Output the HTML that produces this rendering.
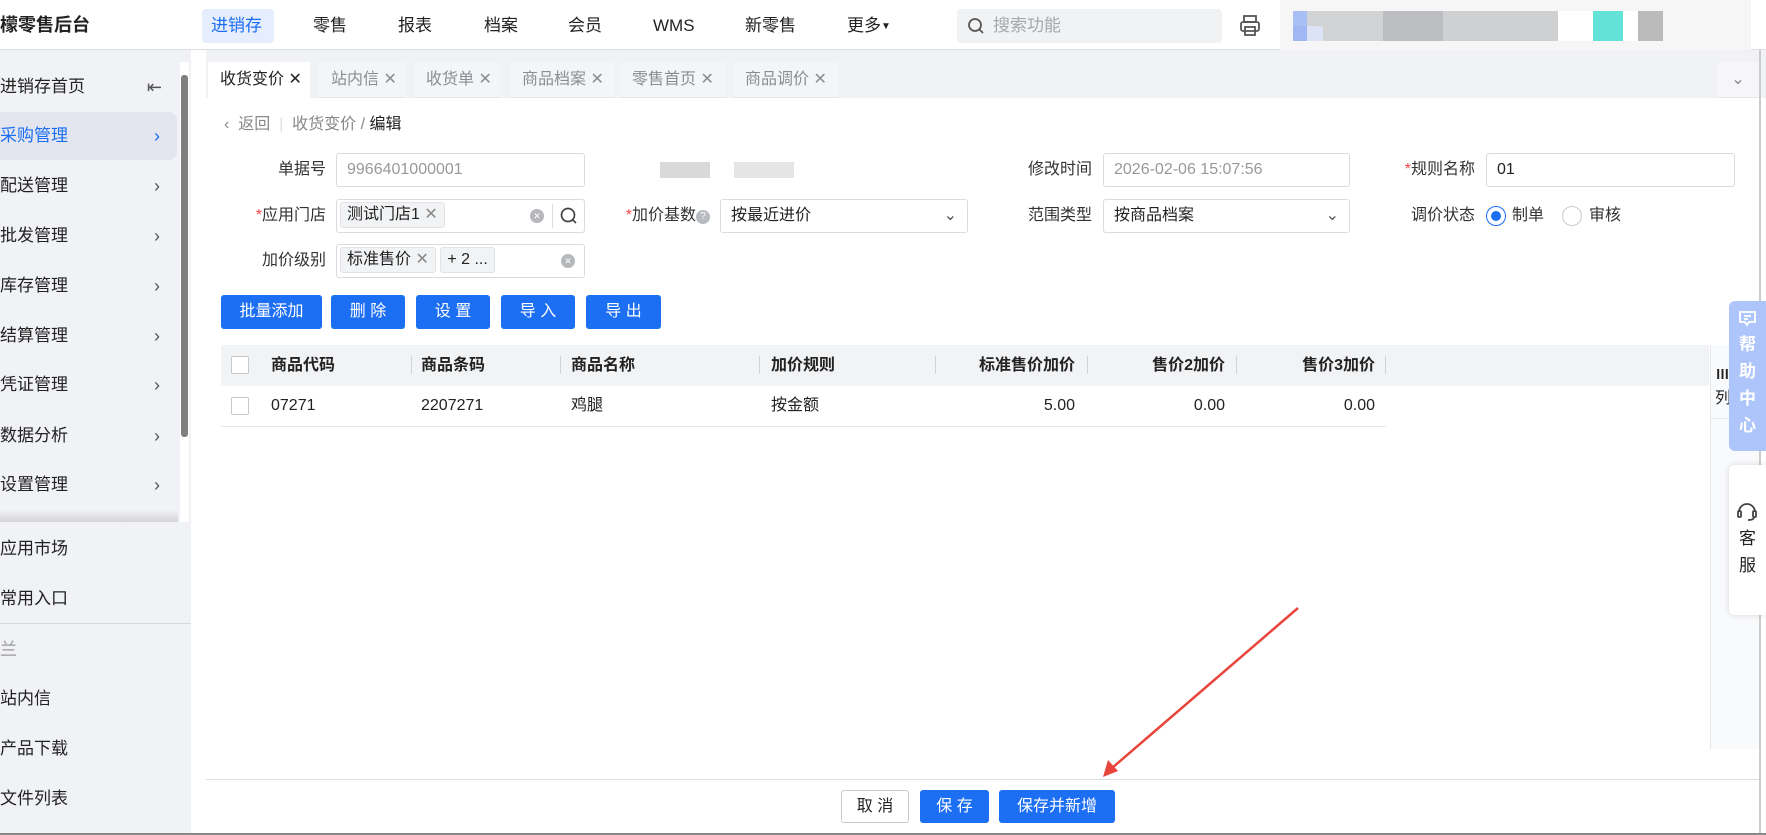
<!DOCTYPE html>
<html><head><meta charset="utf-8"><style>
*{box-sizing:border-box;margin:0;padding:0}
body{width:1766px;height:835px;overflow:hidden;position:relative;background:#fff;font-family:"Liberation Sans","Noto Sans CJK SC",sans-serif;font-size:16px;color:#222}
.a{position:absolute;white-space:nowrap}
.nav{left:0;top:0;width:1766px;height:50px;background:#fff;border-bottom:1px solid #dcdde0}
.mi{top:9px;height:34px;line-height:34px;font-size:17px;color:#222}
.side{left:0;top:50px;width:191px;height:785px;background:#f1f2f5}
.si{left:0;font-size:17px;color:#222;width:178px;height:46px;line-height:46px}
.si .ch{position:absolute;right:18px;top:0;color:#555;font-size:18px}
.tabbar{left:206px;top:50px;width:1560px;height:48px;background:#f1f2f5}
.tab{top:62px;height:36px;line-height:36px;background:#f4f5f7;color:#8a8d93;font-size:16px;padding-left:12px;border-bottom:1px solid #e4e5e8}
.lbl{font-size:16px;color:#333;text-align:right;height:34px;line-height:34px}
.inp{height:34px;border:1px solid #d9dbe0;border-radius:3px;background:#fff;line-height:32px;padding-left:10px;font-size:16px}
.btn{top:295px;height:34px;line-height:34px;background:#1c6ef2;color:#fff;border-radius:3px;text-align:center;font-size:16px}
.th{top:345px;height:41px;line-height:41px;font-weight:bold;font-size:16px;color:#222}
.td{top:386px;height:40px;line-height:40px;font-size:16px;color:#222}
.sep{top:356px;width:1px;height:18px;background:#d0d2d6}
.tag{height:26px;line-height:24px;background:#f2f3f5;border:1px solid #e2e3e6;border-radius:3px;padding:0 6px;font-size:16px}
.cb{width:18px;height:18px;border:1px solid #c6c8cc;border-radius:2px;background:#fff}
</style></head><body>
<div class="a nav"></div>
<div class="a" style="left:0;top:12px;font-size:18px;font-weight:bold;line-height:26px">檬零售后台</div>
<div class="a" style="left:202px;top:9px;width:72px;height:34px;background:#e6edfd;border-radius:4px"></div>
<div class="a mi" style="left:211px;color:#1c6ef2">进销存</div>
<div class="a mi" style="left:313px">零售</div>
<div class="a mi" style="left:398px">报表</div>
<div class="a mi" style="left:484px">档案</div>
<div class="a mi" style="left:568px">会员</div>
<div class="a mi" style="left:653px">WMS</div>
<div class="a mi" style="left:745px">新零售</div>
<div class="a mi" style="left:847px">更多<span style="font-size:10px;vertical-align:2px">▼</span></div>
<div class="a" style="left:957px;top:9px;width:265px;height:34px;background:#f1f2f4;border-radius:4px"></div>
<svg class="a" style="left:967px;top:17px" width="18" height="18" viewBox="0 0 18 18"><circle cx="8" cy="8" r="6" fill="none" stroke="#555" stroke-width="1.8"/><path d="M12.5 12.5L16 16" stroke="#555" stroke-width="1.8"/></svg>
<div class="a" style="left:993px;top:9px;line-height:34px;color:#a5a8ad;font-size:17px">搜索功能</div>
<svg class="a" style="left:1238px;top:14px" width="24" height="24" viewBox="0 0 24 24" fill="none" stroke="#555" stroke-width="1.8"><rect x="6" y="2" width="12" height="6"/><rect x="3" y="8" width="18" height="9" rx="2"/><rect x="7" y="13" width="10" height="8"/></svg>
<div class="a" style="left:1280px;top:0;width:471px;height:52px;background:#f6f6f7"></div>
<div class="a" style="left:1293px;top:11px;width:370px;height:30px;background:linear-gradient(90deg,#a8bff5 0 14px,#d2d3d5 14px 90px,#bcbdc0 90px 150px,#cfd0d2 150px 265px,#fff 265px 300px,#63e3d8 300px 330px,#fff 330px 345px,#bbb 345px 380px,#e3e3e3 380px)"></div>
<div class="a" style="left:1293px;top:26px;width:330px;height:15px;background:linear-gradient(90deg,#9fb6f3 0 14px,#dde5fb 14px 30px,transparent 30px);opacity:.9"></div>

<div class="a side"></div>
<div class="a" style="left:180px;top:62px;width:9px;height:460px;background:#fff"></div>
<div class="a" style="left:181px;top:75px;width:7px;height:362px;background:#7f7f7f;border-radius:3px"></div>
<div class="a" style="left:0;top:510px;width:178px;height:12px;background:linear-gradient(#f1f2f5,#d5d5d7)"></div>
<div class="a si" style="top:64px">进销存首页<span class="ch" style="right:16px">⇤</span></div>
<div class="a" style="left:0;top:112px;width:177px;height:48px;background:#e3e6ef;border-radius:0 8px 8px 0"></div>
<div class="a si" style="top:113px;color:#1c6ef2">采购管理<span class="ch" style="color:#1c6ef2">›</span></div>
<div class="a si" style="top:163px">配送管理<span class="ch">›</span></div>
<div class="a si" style="top:213px">批发管理<span class="ch">›</span></div>
<div class="a si" style="top:263px">库存管理<span class="ch">›</span></div>
<div class="a si" style="top:313px">结算管理<span class="ch">›</span></div>
<div class="a si" style="top:362px">凭证管理<span class="ch">›</span></div>
<div class="a si" style="top:413px">数据分析<span class="ch">›</span></div>
<div class="a si" style="top:462px">设置管理<span class="ch">›</span></div>
<div class="a si" style="top:526px">应用市场</div>
<div class="a si" style="top:576px">常用入口</div>
<div class="a" style="left:0;top:623px;width:191px;height:1px;background:#d8d9dc"></div>
<div class="a si" style="top:627px;color:#999">兰</div>
<div class="a si" style="top:676px">站内信</div>
<div class="a si" style="top:726px">产品下载</div>
<div class="a si" style="top:776px">文件列表</div>

<div class="a tabbar"></div>
<div class="a tab" style="left:208px;width:102px;background:#fff;color:#222;border:none">收货变价 ✕</div>
<div class="a tab" style="left:319px;width:86px">站内信 ✕</div>
<div class="a tab" style="left:414px;width:86px">收货单 ✕</div>
<div class="a tab" style="left:510px;width:105px">商品档案 ✕</div>
<div class="a tab" style="left:620px;width:106px">零售首页 ✕</div>
<div class="a tab" style="left:733px;width:106px">商品调价 ✕</div>
<div class="a" style="left:1717px;top:62px;width:42px;height:36px;background:#f6f6f8;border-bottom:1px solid #e4e5e8;text-align:center;line-height:36px;color:#888">⌄</div>
<div class="a" style="left:1759px;top:50px;width:2px;height:785px;background:#ccc"></div>

<div class="a" style="left:224px;top:113px;line-height:24px;color:#888;font-size:16px">‹ &nbsp;返回 <span style="color:#ddd">&nbsp;|&nbsp;</span> 收货变价 / <span style="color:#222">编辑</span></div>

<div class="a lbl" style="left:240px;top:153px;width:86px">单据号</div>
<div class="a inp" style="left:336px;top:153px;width:249px;color:#999">9966401000001</div>
<div class="a" style="left:660px;top:162px;width:50px;height:16px;background:#d9d9da"></div>
<div class="a" style="left:734px;top:162px;width:60px;height:16px;background:#e5e5e6"></div>
<div class="a lbl" style="left:1000px;top:153px;width:92px">修改时间</div>
<div class="a inp" style="left:1103px;top:153px;width:247px;color:#999">2026-02-06 15:07:56</div>
<div class="a lbl" style="left:1380px;top:153px;width:95px"><span style="color:#f04848">*</span>规则名称</div>
<div class="a inp" style="left:1486px;top:153px;width:249px">01</div>

<div class="a lbl" style="left:230px;top:199px;width:96px"><span style="color:#f04848">*</span>应用门店</div>
<div class="a inp" style="left:336px;top:199px;width:249px;padding-left:3px"><span class="tag" style="display:inline-block;vertical-align:1px">测试门店1 <span style="color:#888">✕</span></span></div>
<div class="a" style="left:530px;top:209px;width:14px;height:14px;border-radius:7px;background:#b5b7bb;color:#fff;font-size:9px;line-height:14px;text-align:center">✕</div>
<div class="a" style="left:552px;top:204px;width:1px;height:24px;background:#ddd"></div>
<svg class="a" style="left:559px;top:206px" width="20" height="20" viewBox="0 0 20 20"><circle cx="9" cy="9" r="6.5" fill="none" stroke="#444" stroke-width="1.7"/><path d="M13.5 13.5L17 17" stroke="#444" stroke-width="1.7"/></svg>
<div class="a lbl" style="left:600px;top:199px;width:110px"><span style="color:#f04848">*</span>加价基数<span style="display:inline-block;width:14px;height:14px;border-radius:7px;background:#b8bbc0;color:#fff;font-size:10px;line-height:14px;text-align:center;vertical-align:1px">?</span></div>
<div class="a inp" style="left:720px;top:199px;width:248px">按最近进价<span style="position:absolute;right:10px;color:#555">⌄</span></div>
<div class="a lbl" style="left:1000px;top:199px;width:92px">范围类型</div>
<div class="a inp" style="left:1103px;top:199px;width:247px">按商品档案<span style="position:absolute;right:10px;color:#555">⌄</span></div>
<div class="a lbl" style="left:1380px;top:199px;width:95px">调价状态</div>
<div class="a" style="left:1486px;top:206px;width:20px;height:20px;border-radius:10px;border:1px solid #1c6ef2;background:#fff"></div>
<div class="a" style="left:1491px;top:211px;width:10px;height:10px;border-radius:5px;background:#1c6ef2"></div>
<div class="a lbl" style="left:1512px;top:199px">制单</div>
<div class="a" style="left:1562px;top:206px;width:20px;height:20px;border-radius:10px;border:1px solid #ccc;background:#fff"></div>
<div class="a lbl" style="left:1589px;top:199px">审核</div>

<div class="a lbl" style="left:240px;top:244px;width:86px">加价级别</div>
<div class="a inp" style="left:336px;top:244px;width:249px;padding-left:3px"><span class="tag" style="display:inline-block;vertical-align:1px">标准售价 <span style="color:#888">✕</span></span> <span class="tag" style="display:inline-block;vertical-align:1px">+ 2 ...</span></div>
<div class="a" style="left:561px;top:254px;width:14px;height:14px;border-radius:7px;background:#b5b7bb;color:#fff;font-size:9px;line-height:14px;text-align:center">✕</div>

<div class="a btn" style="left:221px;width:101px">批量添加</div>
<div class="a btn" style="left:331px;width:74px">删 除</div>
<div class="a btn" style="left:416px;width:74px">设 置</div>
<div class="a btn" style="left:501px;width:74px">导 入</div>
<div class="a btn" style="left:586px;width:75px">导 出</div>

<div class="a" style="left:221px;top:345px;width:1488px;height:41px;background:#f2f3f5"></div>
<div class="a cb" style="left:231px;top:356px"></div>
<div class="a th" style="left:271px">商品代码</div>
<div class="a th" style="left:421px">商品条码</div>
<div class="a th" style="left:571px">商品名称</div>
<div class="a th" style="left:771px">加价规则</div>
<div class="a th" style="left:940px;width:135px;text-align:right">标准售价加价</div>
<div class="a th" style="left:1100px;width:125px;text-align:right">售价2加价</div>
<div class="a th" style="left:1250px;width:125px;text-align:right">售价3加价</div>
<div class="a sep" style="left:411px"></div><div class="a sep" style="left:560px"></div><div class="a sep" style="left:759px"></div><div class="a sep" style="left:935px"></div><div class="a sep" style="left:1087px"></div><div class="a sep" style="left:1236px"></div><div class="a sep" style="left:1385px"></div>
<div class="a cb" style="left:231px;top:397px"></div>
<div class="a td" style="left:271px">07271</div>
<div class="a td" style="left:421px">2207271</div>
<div class="a td" style="left:571px">鸡腿</div>
<div class="a td" style="left:771px">按金额</div>
<div class="a td" style="left:940px;width:135px;text-align:right">5.00</div>
<div class="a td" style="left:1100px;width:125px;text-align:right">0.00</div>
<div class="a td" style="left:1250px;width:125px;text-align:right">0.00</div>
<div class="a" style="left:221px;top:426px;width:1165px;height:1px;background:#e6e7ea"></div>
<div class="a" style="left:1710px;top:345px;width:1px;height:404px;background:#e6e7ea"></div>
<div class="a" style="left:1711px;top:345px;width:48px;height:404px;background:#f9fafb"></div>
<div class="a" style="left:1716px;top:364px;font-size:13px;font-weight:bold">Ⅲ</div>
<div class="a" style="left:1715px;top:384px;font-size:16px">列</div>
<div class="a" style="left:1711px;top:418px;width:30px;height:1px;background:#e6e7ea"></div>

<div class="a" style="left:1729px;top:301px;width:37px;height:150px;background:#aec5fb;border-radius:6px 0 0 6px;color:#fff;font-size:17px;font-weight:bold;text-align:center;line-height:27px;padding-top:30px">帮<br>助<br>中<br>心</div>
<svg class="a" style="left:1738px;top:310px" width="19" height="17" viewBox="0 0 19 17" fill="none" stroke="#fff" stroke-width="1.8"><path d="M2 2h15v10H11l-2 3-2-3H2z"/><path d="M6 6h7M6 9h4"/></svg>
<div class="a" style="left:1729px;top:465px;width:37px;height:150px;background:#fff;border-radius:6px 0 0 6px;box-shadow:0 0 6px rgba(0,0,0,.15);text-align:center;font-size:17px;line-height:27px;padding-top:60px">客<br>服</div>
<svg class="a" style="left:1736px;top:500px" width="22" height="22" viewBox="0 0 22 22" fill="none" stroke="#444" stroke-width="1.8"><path d="M3 12a8 8 0 0116 0"/><rect x="2" y="11" width="3" height="6" rx="1"/><rect x="17" y="11" width="3" height="6" rx="1"/><path d="M18 17q0 3-6 3"/></svg>

<div class="a" style="left:206px;top:779px;width:1553px;height:1px;background:#dcdde0"></div>
<div class="a" style="left:841px;top:790px;width:68px;height:33px;border:1px solid #c9cbd0;border-radius:3px;text-align:center;line-height:31px">取 消</div>
<div class="a btn" style="left:920px;top:790px;width:69px;height:33px;line-height:33px">保 存</div>
<div class="a btn" style="left:999px;top:790px;width:116px;height:33px;line-height:33px">保存并新增</div>
<div class="a" style="left:0;top:833px;width:1766px;height:2px;background:#888"></div>

<svg class="a" style="left:0;top:0" width="1766" height="835"><line x1="1298" y1="608" x2="1112" y2="768" stroke="#e8453c" stroke-width="2.5"/><polygon points="1103,777 1108,760 1118,771" fill="#e8453c"/></svg>
</body></html>
